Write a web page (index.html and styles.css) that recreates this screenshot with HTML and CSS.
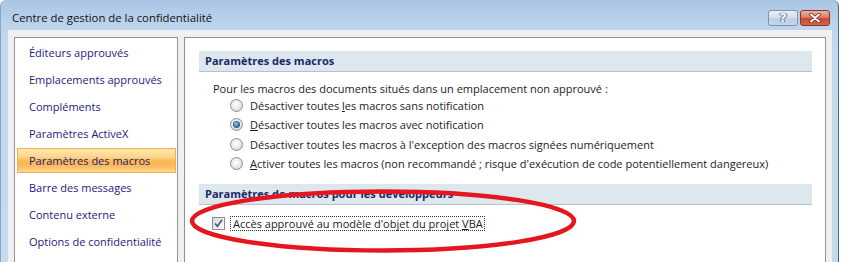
FILE: index.html
```html
<!DOCTYPE html>
<html lang="fr">
<head>
<meta charset="utf-8">
<title>Centre de gestion de la confidentialité</title>
<link rel="stylesheet" href="styles.css">
</head>
<body>
<div class="window">
  <div class="titlebar">
    <span class="title">Centre de gestion de la confidentialité</span>
    <div class="caption-btns">
      <span class="cbtn help">?</span>
      <span class="cbtn close">
        <svg width="14" height="10" viewBox="0 0 14 10">
          <path d="M3 1.5 L11 8.5 M11 1.5 L3 8.5" stroke="#6b2a20" stroke-width="3.6" stroke-linecap="round"/>
          <path d="M3 1.5 L11 8.5 M11 1.5 L3 8.5" stroke="#ffffff" stroke-width="2" stroke-linecap="round"/>
        </svg>
      </span>
    </div>
  </div>
  <div class="client">
    <nav class="sidebar">
      <div class="nav-item">Éditeurs approuvés</div>
      <div class="nav-item">Emplacements approuvés</div>
      <div class="nav-item">Compléments</div>
      <div class="nav-item">Paramètres ActiveX</div>
      <div class="nav-item selected">Paramètres des macros</div>
      <div class="nav-item">Barre des messages</div>
      <div class="nav-item">Contenu externe</div>
      <div class="nav-item">Options de confidentialité</div>
    </nav>
    <main class="panel">
      <section class="group">
        <h2 class="group-header">Paramètres des macros</h2>
        <p class="desc">Pour les macros des documents situés dans un emplacement non approuvé :</p>
        <div class="radios">
          <div class="row"><span class="radio"></span><span>Désactiver toutes <u>l</u>es macros sans notification</span></div>
          <div class="row"><span class="radio checked"></span><span><u>D</u>ésactiver toutes les macros avec notification</span></div>
          <div class="row"><span class="radio"></span><span>Désactiver toutes les macros à l'exception des macros si<u>g</u>nées numériquement</span></div>
          <div class="row"><span class="radio"></span><span><u>A</u>ctiver toutes les macros (non recommandé ; risque d'exécution de code potentiellement dangereux)</span></div>
        </div>
      </section>
      <section class="group second">
        <h2 class="group-header">Paramètres de macros pour les développeurs</h2>
        <div class="check-row">
          <span class="checkbox">
            <svg width="11" height="11" viewBox="0 0 11 11">
              <path d="M2 5.5 L4.4 8.2 L9 1.8" fill="none" stroke="#4d5f93" stroke-width="1.8"/>
            </svg>
          </span>
          <span class="check-label">Accès approuvé au modèle d'objet du projet <u>V</u>BA</span>
        </div>
      </section>
    </main>
  </div>
  <svg class="annotation" width="839" height="262" viewBox="0 0 839 262">
    <ellipse cx="383" cy="221" rx="191" ry="29.5" fill="none" stroke="#e5161d" stroke-width="4.5"/>
  </svg>
</div>
</body>
</html>
```

FILE: styles.css
```css
html, body {
  margin: 0;
  padding: 0;
  background: #ffffff;
}

body {
  width: 841px;
  height: 262px;
  overflow: hidden;
  font-family: "Open Sans", "Noto Sans", "DejaVu Sans", sans-serif;
  font-size: 11px;
  color: #1c1c1c;
}

.window {
  position: relative;
  width: 839px;
  height: 262px;
  box-sizing: border-box;
  border-left: 1px solid #8aa4c4;
  border-right: 1px solid #55667c;
  border-radius: 6px 6px 0 0;
  background: linear-gradient(#aac5e4 0, #b9d1eb 20px, #c3d8ee 40px, #c6daef 100%);
  overflow: hidden;
}

.titlebar {
  height: 30px;
  display: flex;
  align-items: flex-start;
  justify-content: space-between;
  padding: 0 8px 0 11px;
}

.title {
  margin-top: 10px;
  line-height: 15px;
  font-size: 11.35px;
  color: #111;
}

.caption-btns {
  display: flex;
  gap: 2px;
  margin-top: 10px;
}

.cbtn {
  width: 30px;
  height: 16px;
  box-sizing: border-box;
  border-radius: 3px;
  display: flex;
  align-items: center;
  justify-content: center;
}

.help {
  border: 1px solid #7e93b0;
  background: linear-gradient(#e9f0f8 0, #d4e1f0 45%, #bccfe6 55%, #c6d7ec 100%);
  color: #fff;
  font-family: "DejaVu Sans", sans-serif;
  font-weight: bold;
  font-size: 13px;
  line-height: 14px;
  text-shadow: 0 0 1px #4a5a70, 0 0 1px #4a5a70, 1px 0 0 #6a7a90, -1px 0 0 #6a7a90;
}

.close {
  border: 1px solid #8a3223;
  background: linear-gradient(#eab2a6 0, #dc7d6a 45%, #c9462f 55%, #d4664d 100%);
}

.client {
  display: flex;
  gap: 6px;
  margin-left: 7px;
  width: 824px;
  height: 240px;
  box-sizing: border-box;
  padding: 7px 6px 0 6px;
  background: #f0f0f0;
}

.sidebar {
  width: 164px;
  height: 240px;
  flex: none;
  box-sizing: border-box;
  border: 1px solid #8e9096;
  background: #ffffff;
  padding: 2px 1px 0 2px;
}

.nav-item {
  height: 25px;
  margin-bottom: 2px;
  box-sizing: border-box;
  padding-left: 12px;
  line-height: 25px;
  color: #1b1b80;
  white-space: nowrap;
}

.nav-item.selected {
  border: 1px solid #e3b555;
  padding-left: 11px;
  line-height: 23px;
  background: linear-gradient(#fee7ae 0, #fdd58a 35%, #fbb44f 55%, #fcc064 80%, #fed892 100%);
}

.panel {
  width: 642px;
  height: 240px;
  flex: none;
  box-sizing: border-box;
  border: 1px solid #8e9096;
  background: #ffffff;
  padding: 13px 13px 0 14px;
}

.group-header {
  margin: 0;
  height: 21px;
  box-sizing: border-box;
  padding-left: 6px;
  line-height: 20px;
  font-size: 11px;
  font-weight: bold;
  color: #1a2868;
  background: #dde7ee;
  border-bottom: 1px solid #b9c0c6;
}

.desc {
  margin: 9px 0 0 14px;
  line-height: 15px;
  white-space: nowrap;
}

.radios {
  margin-left: 31px;
}

.row {
  height: 19.3px;
  display: flex;
  align-items: center;
  white-space: nowrap;
}

.radio {
  width: 13px;
  height: 13px;
  flex: none;
  box-sizing: border-box;
  border-radius: 50%;
  border: 1px solid #8c8c8c;
  background: radial-gradient(circle at 45% 40%, #ffffff 0, #ebebeb 45%, #cfcfcf 100%);
  margin-right: 7px;
}

.radio.checked::after {
  content: "";
  display: block;
  width: 5px;
  height: 5px;
  margin: 3px;
  border-radius: 50%;
  background: radial-gradient(circle at 40% 35%, #9bd6f7 0, #2a7fc0 55%, #0d3f70 100%);
  box-shadow: 0 0 0 1px #3b5d80;
}

.second {
  margin-top: 10.8px;
}

.check-row {
  display: flex;
  align-items: center;
  margin: 11px 0 0 13px;
  height: 15px;
}

.checkbox {
  width: 13px;
  height: 13px;
  flex: none;
  box-sizing: border-box;
  border: 1px solid #8e8f8f;
  background: linear-gradient(135deg, #d6d6d6 0, #efefef 60%, #ffffff 100%);
  display: flex;
  align-items: center;
  justify-content: center;
  margin-right: 5px;
}

.check-label {
  border: 1px dotted #333;
  padding: 0 1px 0 2px;
  line-height: 13px;
  white-space: nowrap;
}

.annotation {
  position: absolute;
  left: -1px;
  top: 0;
  pointer-events: none;
}
```
